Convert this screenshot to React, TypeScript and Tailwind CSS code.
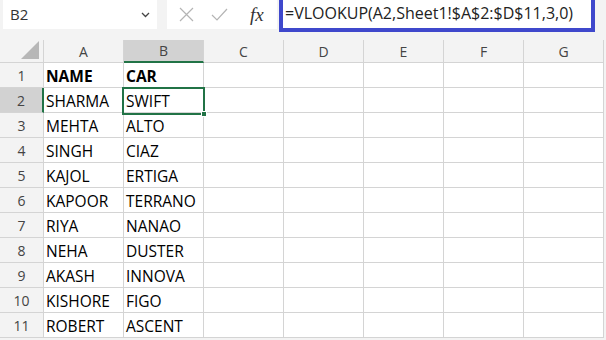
import React from "react"

const cols = ["A", "B", "C", "D", "E", "F", "G"]

const rows: [string, string][] = [
    ["NAME", "CAR"],
    ["SHARMA", "SWIFT"],
    ["MEHTA", "ALTO"],
    ["SINGH", "CIAZ"],
    ["KAJOL", "ERTIGA"],
    ["KAPOOR", "TERRANO"],
    ["RIYA", "NANAO"],
    ["NEHA", "DUSTER"],
    ["AKASH", "INNOVA"],
    ["KISHORE", "FIGO"],
    ["ROBERT", "ASCENT"],
]

const cellFont = { fontFamily: '"Open Sans", "Noto Sans", sans-serif' }

const App: React.FC = () => {
    return (
        <div className="w-[606px] h-[340px] overflow-hidden bg-[#f3f3f3] relative" style={cellFont}>
            {/* formula bar */}
            <div className="flex items-start h-[40px]">
                <div className="ml-[3px] w-[154px] h-[29px] bg-white flex items-center justify-between pl-[7px] pr-[7px]">
                    <span className="text-[15px] text-[#333]">B2</span>
                    <svg width="9" height="6" viewBox="0 0 9 6" className="mt-[1px]">
                        <path d="M1 1 L4.5 4.5 L8 1" stroke="#444" strokeWidth="1.3" fill="none" />
                    </svg>
                </div>
                <div className="ml-[10px] w-[110px] h-[29px] bg-white flex items-center">
                    <svg width="15" height="15" viewBox="0 0 15 15" className="ml-[12px]">
                        <path d="M1 1 L14 14 M14 1 L1 14" stroke="#b4b4b4" strokeWidth="1.2" />
                    </svg>
                    <svg width="17" height="13" viewBox="0 0 17 13" className="ml-[17px]">
                        <path d="M1 7 L6 12 L16 1" stroke="#b4b4b4" strokeWidth="1.2" fill="none" />
                    </svg>
                    <span className="ml-[22px] text-[19px] italic text-[#333] leading-none" style={{ fontFamily: '"Liberation Serif", serif' }}>fx</span>
                </div>
                <div className="ml-[2px] w-[316px] h-[32px] bg-white border-x-4 border-b-4 border-[#3f48cc] flex items-center pl-[2px]">
                    <span className="text-[16px] text-[#222] -mt-[3px]">=VLOOKUP(A2,Sheet1!$A$2:$D$11,3,0)</span>
                </div>
            </div>

            {/* grid */}
            <div className="relative grid grid-cols-[44px_repeat(7,80px)]">
                <div className="h-[23px] border-r border-b border-[#d4d4d4] flex items-end justify-end pr-[4px] pb-[3px]">
                    <div className="w-0 h-0 border-l-[18px] border-l-transparent border-b-[18px] border-b-[#b7b7b7]" />
                </div>
                {cols.map(c => (
                    <div
                        key={c}
                        className={
                            c === "B"
                                ? "h-[23px] bg-[#d2d2d2] border-r border-[#d4d4d4] border-b-2 border-b-[#217346] flex items-center justify-center pt-[1px] text-[14px] leading-none text-[#444]"
                                : "h-[23px] border-r border-b border-[#d4d4d4] flex items-center justify-center pt-[1px] text-[14px] leading-none text-[#444]"
                        }
                    >
                        {c}
                    </div>
                ))}
                {rows.map((r, i) => (
                    <React.Fragment key={i}>
                        <div
                            className={
                                i === 1
                                    ? "h-[25px] bg-[#d2d2d2] border-r-2 border-r-[#217346] border-b border-b-[#d4d4d4] flex items-center justify-center pt-[2px] text-[14px] leading-none text-[#444]"
                                    : "h-[25px] border-r border-b border-[#d4d4d4] flex items-center justify-center pt-[2px] text-[14px] leading-none text-[#444]"
                            }
                        >
                            {i + 1}
                        </div>
                        {cols.map((c, j) => (
                            <div
                                key={c}
                                className={
                                    "h-[25px] bg-white border-r border-b border-[#d4d4d4] flex items-center pl-[2px] pt-[3px] text-[15.5px] leading-none text-black whitespace-nowrap overflow-visible " +
                                    (i === 0 ? "font-bold" : "")
                                }
                            >
                                {j === 0 ? r[0] : j === 1 ? r[1] : ""}
                            </div>
                        ))}
                    </React.Fragment>
                ))}
                {/* active cell */}
                <div className="absolute left-[122px] top-[47px] w-[83px] h-[28px] border-2 border-[#217346] pointer-events-none" />
                <div className="absolute left-[201px] top-[71px] w-[6px] h-[6px] bg-[#217346] border border-white" />
            </div>
        </div>
    )
}

export default App
